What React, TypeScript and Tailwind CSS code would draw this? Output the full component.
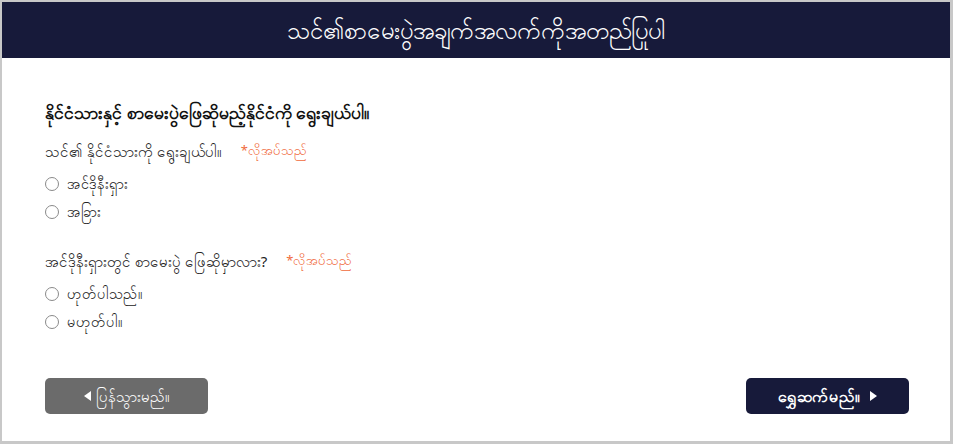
import React from "react";

const font = { fontFamily: '"Noto Sans", "DejaVu Sans", sans-serif' };

function Radio({ label }: { label: string }) {
  return (
    <label className="flex items-center gap-[8px] h-[28px] text-[14.5px] text-[#222]">
      <span className="w-[14px] h-[14px] rounded-full border border-[#8a8a8a] bg-white shrink-0" />
      <span>{label}</span>
    </label>
  );
}

function Question({ title, options }: { title: string; options: string[] }) {
  return (
    <div>
      <div className="flex items-center h-[30px] text-[15px] text-[#222]">
        <span>{title}</span>
        <span className="ml-[19px] text-[13px] text-[#f06a3c]">*လိုအပ်သည်</span>
      </div>
      <div className="mt-[4px]">
        {options.map((o) => (
          <Radio key={o} label={o} />
        ))}
      </div>
    </div>
  );
}

export default function App() {
  return (
    <div
      className="w-[953px] h-[444px] bg-white border-t-2 border-l-2 border-r-[3px] border-b-[3px] border-[#c8c8c8] flex flex-col"
      style={font}
    >
      {/* header bar */}
      <div className="h-[56px] bg-[#171a3a] flex items-center justify-center text-white text-[24px]">
        သင်၏စာမေးပွဲအချက်အလက်ကိုအတည်ပြုပါ
      </div>

      <div className="flex-1 pl-[43px] pr-[41px] pt-[40px] flex flex-col">
        <h2 className="text-[17.5px] font-bold text-[#111] h-[28px] flex items-center">
          နိုင်ငံသားနှင့် စာမေးပွဲဖြေဆိုမည့်နိုင်ငံကို ရွေးချယ်ပါ။
        </h2>
        <div className="mt-[10px]">
          <Question title="သင်၏ နိုင်ငံသားကို ရွေးချယ်ပါ။" options={["အင်ဒိုနီးရှား", "အခြား"]} />
        </div>
        <div className="mt-[20px]">
          <Question
            title="အင်ဒိုနီးရှားတွင် စာမေးပွဲ ဖြေဆိုမှာလား?"
            options={["ဟုတ်ပါသည်။", "မဟုတ်ပါ။"]}
          />
        </div>

        {/* footer buttons */}
        <div className="mt-auto mb-[27px] flex justify-between">
          <button className="w-[163px] h-[36px] rounded-[5px] bg-[#6b6b6b] text-white text-[15px] flex items-center justify-center gap-[4px]">
            <svg width="8" height="10" viewBox="0 0 8 10">
              <path d="M7 0 L0 5 L7 10 Z" fill="white" />
            </svg>
            ပြန်သွားမည်။
          </button>
          <button className="w-[163px] h-[36px] rounded-[5px] bg-[#171a3a] text-white text-[16px] font-bold flex items-center justify-center gap-[9px]">
            ရွှေဆက်မည်။
            <svg width="8" height="10" viewBox="0 0 8 10">
              <path d="M1 0 L8 5 L1 10 Z" fill="white" />
            </svg>
          </button>
        </div>
      </div>
    </div>
  );
}
